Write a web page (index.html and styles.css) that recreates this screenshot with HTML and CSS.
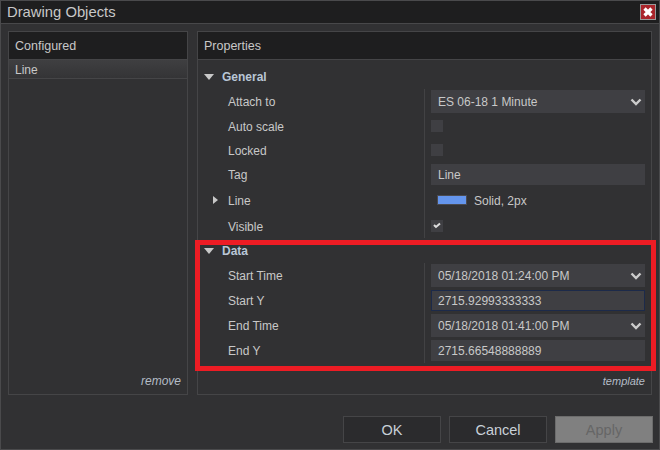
FILE: index.html
```html
<!DOCTYPE html>
<html>
<head>
    <link rel="stylesheet" href="styles.css">
</head>

<body>
    <div class="window">
        <div class="title-bar">
            <span>Drawing Objects</span>
            <div class="close-btn">
                <svg width="12" height="12" viewBox="0 0 12 12"><path d="M2.5 2.5 L9.5 9.5 M9.5 2.5 L2.5 9.5" stroke="#fff" stroke-width="3.2" fill="none"/></svg>
            </div>
        </div>

        <div class="main">
            <div class="panel configured">
                <div class="panel-header">Configured</div>
                <div class="list-item">Line</div>
                <div class="panel-body"></div>
                <div class="panel-link remove">remove</div>
            </div>

            <div class="panel properties">
                <div class="panel-header">Properties</div>
                <div class="prop-grid">
                    <div class="row group">
                        <svg class="arrow-down" width="10" height="6" viewBox="0 0 10 6"><path d="M0 0 H10 L5 6 Z" fill="#c8c8c8"/></svg>
                        <span>General</span>
                    </div>
                    <div class="row">
                        <div class="name">Attach to</div>
                        <div class="value">
                            <div class="field select">
                                <span>ES 06-18 1 Minute</span>
                                <svg width="12" height="8" viewBox="0 0 12 8"><path d="M1.5 1.5 L6 6 L10.5 1.5" stroke="#ccc" stroke-width="2.4" fill="none"/></svg>
                            </div>
                        </div>
                    </div>
                    <div class="row row-short">
                        <div class="name low">Auto scale</div>
                        <div class="value"><div class="check"></div></div>
                    </div>
                    <div class="row row-short">
                        <div class="name low">Locked</div>
                        <div class="value"><div class="check"></div></div>
                    </div>
                    <div class="row">
                        <div class="name">Tag</div>
                        <div class="value"><div class="field text-field">Line</div></div>
                    </div>
                    <div class="row row-tall">
                        <div class="name low">
                            <svg class="arrow-right" width="5" height="8" viewBox="0 0 5 8"><path d="M0 0 L5 4 L0 8 Z" fill="#c8c8c8"/></svg>
                            Line
                        </div>
                        <div class="value">
                            <div class="line-stroke">
                                <div class="swatch"></div>
                                <span>Solid, 2px</span>
                            </div>
                        </div>
                    </div>
                    <div class="row">
                        <div class="name low">Visible</div>
                        <div class="value">
                            <div class="check">
                                <svg width="8" height="7" viewBox="0 0 8 7"><path d="M1 3 L3 5 L7 1.5" stroke="#ddd" stroke-width="2" fill="none"/></svg>
                            </div>
                        </div>
                    </div>
                    <div class="row group">
                        <svg class="arrow-down" width="10" height="6" viewBox="0 0 10 6"><path d="M0 0 H10 L5 6 Z" fill="#c8c8c8"/></svg>
                        <span>Data</span>
                    </div>
                    <div class="row">
                        <div class="name">Start Time</div>
                        <div class="value">
                            <div class="field select">
                                <span>05/18/2018 01:24:00 PM</span>
                                <svg width="12" height="8" viewBox="0 0 12 8"><path d="M1.5 1.5 L6 6 L10.5 1.5" stroke="#ccc" stroke-width="2.4" fill="none"/></svg>
                            </div>
                        </div>
                    </div>
                    <div class="row">
                        <div class="name">Start Y</div>
                        <div class="value"><div class="field text-field focused">2715.92993333333</div></div>
                    </div>
                    <div class="row">
                        <div class="name">End Time</div>
                        <div class="value">
                            <div class="field select">
                                <span>05/18/2018 01:41:00 PM</span>
                                <svg width="12" height="8" viewBox="0 0 12 8"><path d="M1.5 1.5 L6 6 L10.5 1.5" stroke="#ccc" stroke-width="2.4" fill="none"/></svg>
                            </div>
                        </div>
                    </div>
                    <div class="row">
                        <div class="name">End Y</div>
                        <div class="value"><div class="field text-field">2715.66548888889</div></div>
                    </div>
                </div>
                <div class="panel-body"></div>
                <div class="panel-link">template</div>
                <div class="highlight"></div>
            </div>
        </div>

        <div class="btn-container">
            <button type="button">OK</button>
            <button type="button">Cancel</button>
            <button type="button" class="disabled">Apply</button>
        </div>
    </div>
</body>
</html>
```

FILE: styles.css
```css
html, body {
    margin: 0;
    padding: 0;
}

body {
    width: 660px;
    height: 450px;
    overflow: hidden;
    background-color: #313133;
    font-family: "Liberation Sans", Arial, sans-serif;
    font-size: 12px;
    color: #c8c8c8;
}

.window {
    box-sizing: border-box;
    width: 660px;
    height: 450px;
    border: 1px solid #4a4a4c;
    display: flex;
    flex-direction: column;
}

.title-bar {
    box-sizing: border-box;
    height: 23px;
    flex: none;
    padding-left: 6px;
    padding-right: 3px;
    display: flex;
    align-items: center;
    justify-content: space-between;
    background-color: #1e1e1f;
    border-bottom: 1px solid #48484a;
    font-size: 14.8px;
}

.close-btn {
    box-sizing: border-box;
    width: 16px;
    height: 16px;
    display: flex;
    align-items: center;
    justify-content: center;
    background-color: #a9252b;
    border: 1px solid #9a9a9a;
}

.main {
    display: flex;
    gap: 9px;
    padding: 7px 7px 0 7px;
    height: 364px;
    flex: none;
}

.panel {
    position: relative;
    box-sizing: border-box;
    display: flex;
    flex-direction: column;
    border: 1px solid #454547;
}

.configured {
    width: 180px;
}

.properties {
    width: 455px;
}

.panel-header {
    box-sizing: border-box;
    height: 28px;
    flex: none;
    padding-left: 6px;
    display: flex;
    align-items: center;
    background-color: #1e1e1f;
    border-bottom: 1px solid #454547;
    font-size: 12.5px;
}

.list-item {
    box-sizing: border-box;
    height: 19px;
    flex: none;
    padding-left: 6px;
    padding-top: 1px;
    display: flex;
    align-items: center;
    background: linear-gradient(#3f3f41, #343436);
    border-bottom: 1px solid #454547;
}

.panel-body {
    flex: 1;
}

.panel-link {
    flex: none;
    height: 19px;
    padding-right: 6px;
    text-align: right;
    font-style: italic;
    font-size: 11px;
    line-height: 13px;
    color: #b4bcc6;
}

.remove {
    font-size: 12px;
}

.prop-grid {
    padding-top: 4px;
    flex: none;
}

.row {
    height: 25px;
    display: flex;
    align-items: stretch;
}

.row-short {
    height: 24px;
}

.row-tall {
    height: 26px;
}

.group {
    height: 25px;
    align-items: center;
    padding-left: 6px;
    font-weight: bold;
    color: #b9c6d6;
}

.arrow-down {
    margin-right: 8px;
}

.name {
    position: relative;
    box-sizing: border-box;
    width: 226px;
    padding-left: 30px;
    display: flex;
    align-items: center;
}

.name.low {
    padding-top: 2px;
}

.arrow-right {
    position: absolute;
    left: 15px;
    top: 9px;
}

.value {
    box-sizing: border-box;
    width: 221px;
    padding-left: 6px;
    border-left: 1px solid #424244;
    display: flex;
    align-items: center;
}

.field {
    box-sizing: border-box;
    width: 214px;
    padding-left: 7px;
    display: flex;
    align-items: center;
    background-color: #3f3f43;
}

.select {
    height: 23px;
    justify-content: space-between;
    padding-right: 3px;
}

.text-field {
    height: 21px;
}

.focused {
    border: 1px solid #1c2a4a;
    padding-left: 6px;
}

.check {
    width: 12px;
    height: 12px;
    display: flex;
    align-items: center;
    justify-content: center;
    background-color: #3f3f43;
}

.line-stroke {
    display: flex;
    align-items: center;
    gap: 7px;
    padding-left: 6px;
}

.line-stroke span {
    padding-top: 2px;
}

.swatch {
    box-sizing: border-box;
    width: 30px;
    height: 10px;
    background-color: #6495ed;
    border: 1px solid #4a4a50;
}

.highlight {
    position: absolute;
    left: -3px;
    top: 208px;
    width: 451px;
    height: 121px;
    border: 5px solid #ed1c24;
}

.btn-container {
    display: flex;
    justify-content: flex-end;
    gap: 8px;
    padding-top: 21px;
    padding-right: 6px;
}

.btn-container button {
    box-sizing: border-box;
    width: 98px;
    height: 27px;
    padding: 0;
    border: 1px solid #454547;
    background-color: #2b2b2d;
    color: #c8d0d8;
    font-family: "Liberation Sans", Arial, sans-serif;
    font-size: 14.5px;
}

.btn-container button.disabled {
    background-color: #808080;
    border-color: #6c6c6c;
    color: #666;
}
```
